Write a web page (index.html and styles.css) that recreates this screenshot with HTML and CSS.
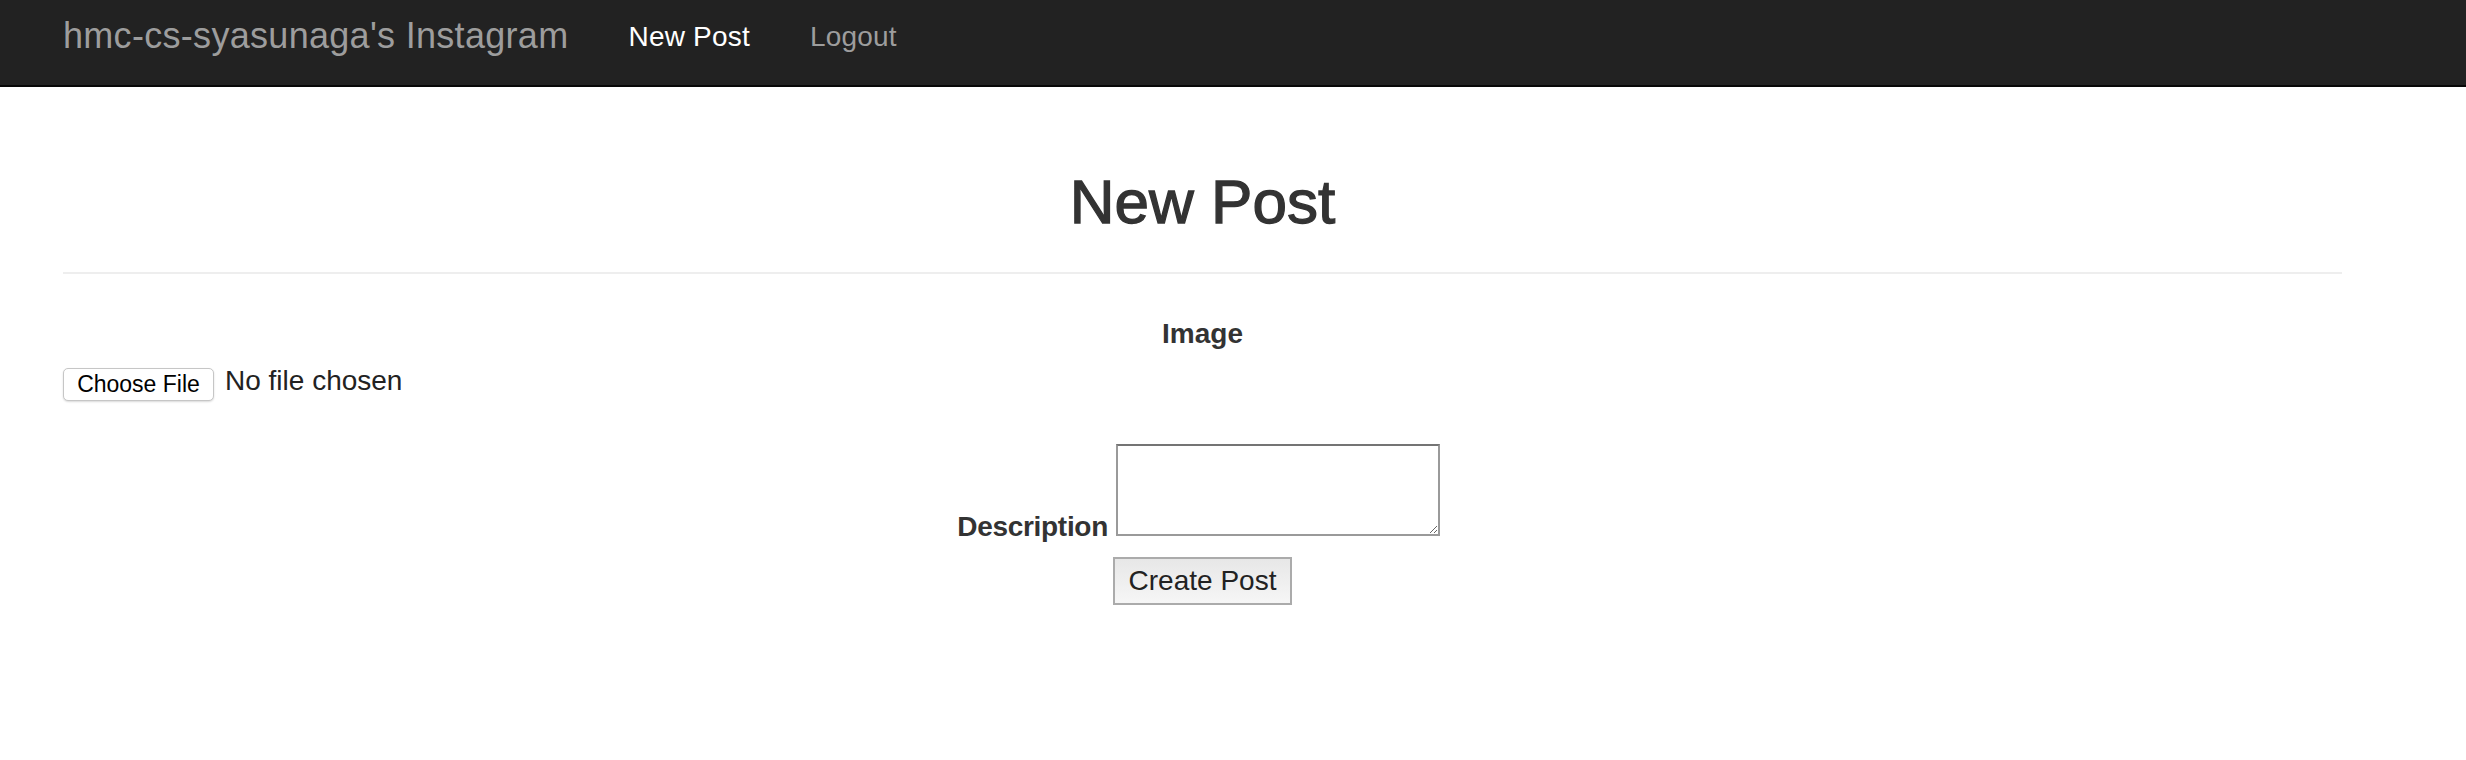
FILE: index.html
```html
<!DOCTYPE html>
<html lang="en">
<head>
<meta charset="utf-8">
<title>New Post</title>
<link rel="stylesheet" href="styles.css">
</head>
<body>
<nav class="navbar">
  <a class="brand" href="#">hmc-cs-syasunaga's Instagram</a>
  <ul class="nav">
    <li><a class="nav-link active" href="#">New Post</a></li>
    <li><a class="nav-link" href="#">Logout</a></li>
  </ul>
</nav>
<main class="container">
  <div class="page-header">
    <h1>New Post</h1>
  </div>
  <form class="post-form">
    <div class="form-group image-group">
      <label class="label">Image</label>
      <div class="file-input">
        <button type="button" class="file-btn">Choose File</button>
        <span class="file-name">No file chosen</span>
      </div>
    </div>
    <div class="form-group desc-group">
      <label class="label desc-label">Description</label>
      <textarea class="desc"></textarea>
    </div>
    <div class="actions">
      <button type="submit" class="submit">Create Post</button>
    </div>
  </form>
</main>
</body>
</html>
```

FILE: styles.css
```css
html, body {
  margin: 0;
  padding: 0;
  background: #fff;
}
body {
  font-family: "Liberation Sans", Arial, sans-serif;
  font-size: 28px;
  line-height: 40px;
  color: #333;
}
.navbar {
  display: flex;
  align-items: flex-start;
  height: 85px;
  background: #222;
  border-bottom: 2px solid #080808;
  padding-left: 63px;
}
.brand {
  font-size: 36px;
  line-height: 40px;
  letter-spacing: 0.3px;
  padding: 16px 30px 0 0;
  color: #9d9d9d;
  text-decoration: none;
}
.nav {
  display: flex;
  list-style: none;
  margin: 0;
  padding: 0;
}
.nav-link {
  display: block;
  font-size: 28px;
  line-height: 40px;
  letter-spacing: 0.2px;
  padding: 17px 30px 0;
  color: #9d9d9d;
  text-decoration: none;
}
.nav-link.active {
  color: #fff;
}
.container {
  padding: 0 124px 0 63px;
}
.page-header {
  margin-top: 75px;
  padding-bottom: 31px;
  border-bottom: 2px solid #eee;
}
.page-header h1 {
  margin: 0;
  text-align: center;
  font-size: 62px;
  line-height: 79px;
  font-weight: normal;
  -webkit-text-stroke: 1.3px #333;
  color: #333;
}
.post-form {
  margin-top: 40px;
  text-align: center;
}
.label {
  font-weight: bold;
}
.image-group .label {
  display: inline-block;
  margin-bottom: 10px;
}
.file-input {
  display: flex;
  align-items: center;
  height: 40px;
  text-align: left;
}
.file-btn {
  width: 151px;
  height: 33px;
  padding: 0;
  margin: 0;
  font-family: "Liberation Sans", Arial, sans-serif;
  font-size: 23px;
  color: #000;
  background: #fff;
  border: 1px solid #c6c6c6;
  border-radius: 5px;
  box-shadow: 0 1px 2px rgba(0, 0, 0, 0.15);
}
.file-name {
  margin: 0 0 6px 11px;
  color: #222;
}
.desc-group {
  margin-top: 40px;
}
.desc-label {
  letter-spacing: -0.3px;
}
.desc {
  display: inline-block;
  width: 324px;
  height: 92px;
  margin: 0 8px 0 0;
  padding: 0;
  box-sizing: border-box;
  border: 2px solid #9a9a9a;
  border-top-color: #747474;
  background: #fff;
  font-family: "Liberation Mono", monospace;
  font-size: 22px;
}
.actions {
  margin-top: 10px;
}
.submit {
  height: 48px;
  padding: 0 14px;
  margin: 0;
  font-family: "Liberation Sans", Arial, sans-serif;
  font-size: 28px;
  color: #222;
  background: linear-gradient(#e7e7e7, #f6f6f6);
  border: 2px solid #ababab;
  border-radius: 0;
}
```
